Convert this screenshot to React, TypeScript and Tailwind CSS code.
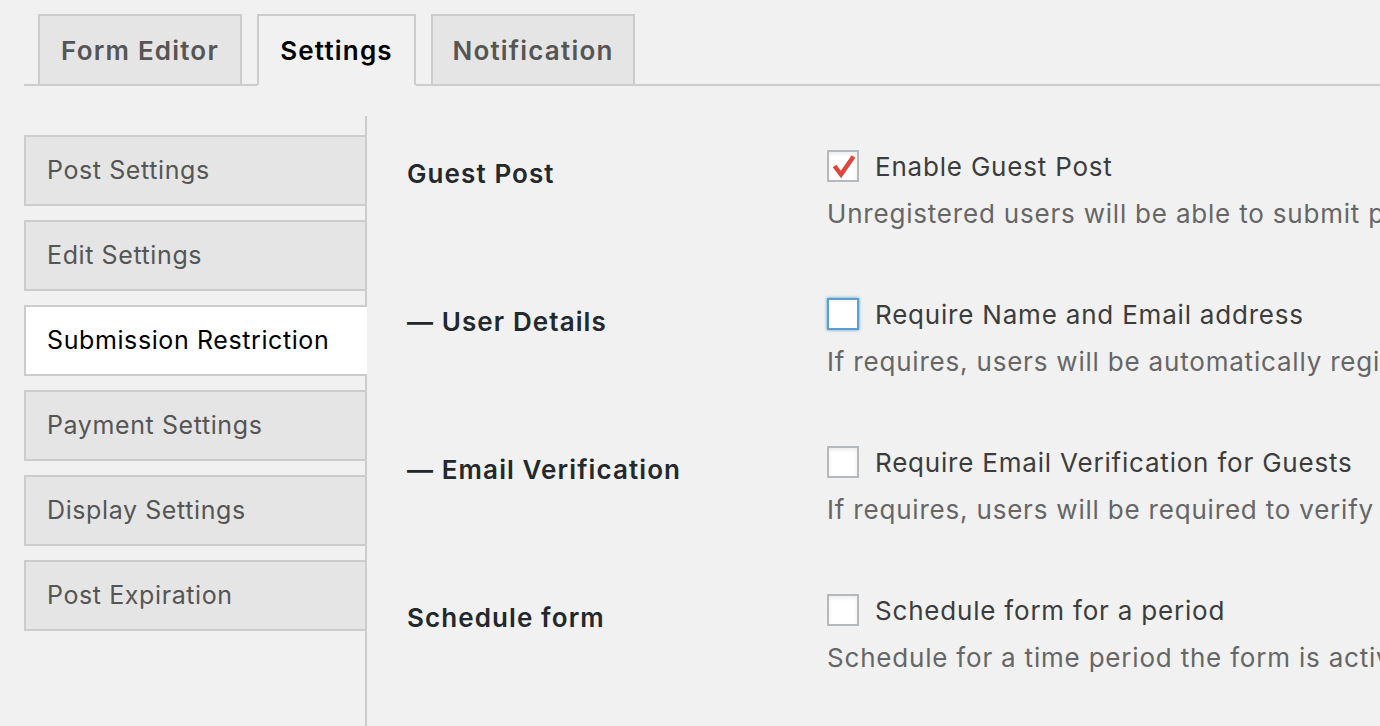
import React from 'react';

const tabs = [
  { label: 'Form Editor', width: 'w-[204px]', active: false },
  { label: 'Settings', width: 'w-[159px]', active: true },
  { label: 'Notification', width: 'w-[204px]', active: false },
];

const sideItems = [
  'Post Settings',
  'Edit Settings',
  'Submission Restriction',
  'Payment Settings',
  'Display Settings',
  'Post Expiration',
];

const rows = [
  {
    title: 'Guest Post',
    label: 'Enable Guest Post',
    desc: 'Unregistered users will be able to submit posts to this form',
    state: 'checked',
  },
  {
    title: '— User Details',
    label: 'Require Name and Email address',
    desc: 'If requires, users will be automatically registered to the site using the name and email address',
    state: 'focus',
  },
  {
    title: '— Email Verification',
    label: 'Require Email Verification for Guests',
    desc: 'If requires, users will be required to verify their email address',
    state: 'none',
  },
  {
    title: 'Schedule form',
    label: 'Schedule form for a period',
    desc: 'Schedule for a time period the form is active',
    state: 'none',
  },
];

function Checkbox({ state }: { state: string }) {
  const border =
    state === 'focus'
      ? 'border-[#5b9dd9] shadow-[0_0_3px_rgba(30,140,190,0.8)]'
      : 'border-[#b4b9be] shadow-[inset_0_2px_4px_rgba(0,0,0,0.08)]';
  return (
    <span className={`w-[32px] h-[32px] shrink-0 bg-white border-2 ${border} flex items-center justify-center`}>
      {state === 'checked' && (
        <svg width="28" height="28" viewBox="0 0 28 28">
          <path d="M5.5 14l6.5 8.5L24.5 4.5" fill="none" stroke="#e0463d" strokeWidth="4.5" strokeLinejoin="miter" />
        </svg>
      )}
    </span>
  );
}

export default function App() {
  return (
    <div
      className="w-[1380px] h-[726px] overflow-hidden bg-[#f1f1f1] pl-[24px] pt-[14px]"
      style={{ fontFamily: 'Inter, "Noto Sans", "Liberation Sans", sans-serif' }}
    >
      <div className="flex gap-[15px] pl-[14px] border-b-2 border-[#ccc] h-[72px]">
        {tabs.map((t) => (
          <div
            key={t.label}
            className={`${t.width} flex items-center justify-center border-2 text-[26px] font-semibold tracking-[1.2px] ${
              t.active
                ? 'h-[72px] bg-[#f1f1f1] border-[#ccc] border-b-[#f1f1f1] text-black'
                : 'h-[70px] bg-[#e5e5e5] border-[#ccc] border-b-0 text-[#555]'
            }`}
          >
            {t.label}
          </div>
        ))}
      </div>

      <div className="flex mt-[30px] h-[700px]">
        <div className="w-[343px] border-r-2 border-[#ccc] pt-[19px] flex flex-col gap-[14px]">
          {sideItems.map((s) => {
            const active = s === 'Submission Restriction';
            return (
              <div
                key={s}
                className={`h-[71px] flex items-center pl-[21px] border-2 border-r-0 text-[25px] tracking-[0.6px] ${
                  active
                    ? 'bg-white border-[#ccc] w-[343px] text-black relative z-10'
                    : 'bg-[#e5e5e5] border-[#ccc] w-[341px] text-[#555]'
                }`}
              >
                {s}
              </div>
            );
          })}
        </div>

        <div className="pl-[40px] pt-[34px] flex-1">
          {rows.map((r) => (
            <div key={r.title} className="flex h-[148px]">
              <div className="w-[420px] shrink-0 mt-[8px] leading-[32px] text-[26px] font-semibold tracking-[1.1px] text-[#23282d]">
                {r.title}
              </div>
              <div className="flex flex-col whitespace-nowrap tracking-[0.8px]">
                <div className="flex items-center gap-[16px] h-[32px] text-[26px] text-[#3c3c3c]">
                  <Checkbox state={r.state} />
                  <span>{r.label}</span>
                </div>
                <div className="mt-[16px] leading-[32px] text-[26px] text-[#666]">{r.desc}</div>
              </div>
            </div>
          ))}
        </div>
      </div>
    </div>
  );
}
